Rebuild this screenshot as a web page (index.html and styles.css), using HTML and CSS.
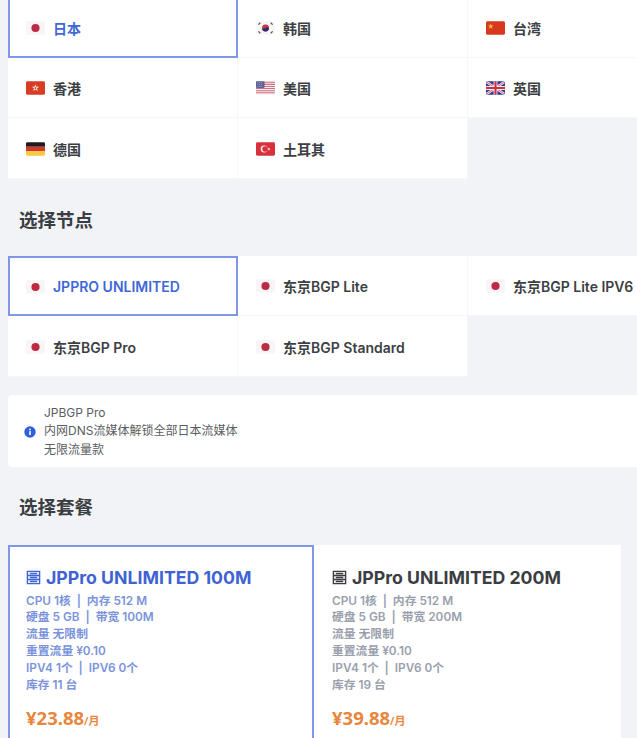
FILE: index.html
```html
<!DOCTYPE html>
<html lang="zh-CN">
<head>
<meta charset="utf-8">
<title>选择节点</title>
<link rel="stylesheet" href="styles.css">
</head>
<body>
<svg class="defs" width="0" height="0" aria-hidden="true">
  <symbol id="jp" viewBox="0 0 20 14"><rect width="20" height="14" rx="1.5" fill="#f9f5f6"/><circle cx="10" cy="7" r="4.3" fill="#bc2a44"/></symbol>
</svg>
<main class="page">
  <section class="grid regions">
    <div class="cell active"><svg class="flag"><use href="#jp"/></svg><span>日本</span></div>
    <div class="cell">
      <svg class="flag" viewBox="0 0 20 14"><rect width="20" height="14" rx="1.5" fill="#f8f6f7"/><circle cx="10" cy="7" r="3.600" fill="#c8324a"/><path d="M6.400 7a3.600 3.600 0 0 0 7.200 0c-1-1.600-2.400-.6-3.600 0s-2.600 1.600-3.600 0z" fill="#29306e"/><path d="M2.500 3.500l2-2M2.500 10.500l2 2M15.500 1.500l2 2M15.500 12.500l2-2" stroke="#555" stroke-width="1.300"/></svg>
      <span>韩国</span></div>
    <div class="cell">
      <svg class="flag" viewBox="0 0 20 14"><rect width="20" height="14" rx="1.500" fill="#d8381f"/><path d="M5 2l.8 2.300H8L6.200 5.700l.7 2.300L5 6.600 3.100 8l.7-2.300L2 4.300h2.200z" fill="#f5c53a"/></svg>
      <span>台湾</span></div>
    <div class="cell">
      <svg class="flag" viewBox="0 0 20 14"><rect width="20" height="14" rx="1.500" fill="#d83c24"/><path d="M10 3.300l1 2.500h2.700l-2.100 1.700.8 2.700L10 8.700l-2.400 1.500.8-2.700-2.100-1.700H9z" fill="#fbeadf"/><circle cx="10" cy="7" r="1" fill="#d83c24"/></svg>
      <span>香港</span></div>
    <div class="cell">
      <svg class="flag" viewBox="0 0 20 14"><rect width="20" height="14" rx="1" fill="#f6eef0"/><path d="M0 1h20M0 3.200h20M0 5.400h20M0 7.600h20M0 9.800h20M0 12h20" stroke="#cf6f7f" stroke-width="1.100"/><rect width="9" height="7" rx="1" fill="#5a6198"/><path d="M1.500 1.500h6M1.500 3.500h6M1.500 5.500h6" stroke="#c8cbe2" stroke-width=".7" stroke-dasharray="1 1"/></svg>
      <span>美国</span></div>
    <div class="cell">
      <svg class="flag" viewBox="0 0 20 14"><rect width="20" height="14" rx="2" fill="#2f3a8c"/><path d="M1 1l18 12M19 1L1 13" stroke="#f4eef2" stroke-width="2.600"/><path d="M1 1l18 12M19 1L1 13" stroke="#cf3350" stroke-width=".8"/><path d="M10 0v14M0 7h20" stroke="#f4eef2" stroke-width="4"/><path d="M10 0v14M0 7h20" stroke="#cf2f45" stroke-width="2.200"/></svg>
      <span>英国</span></div>
    <div class="cell">
      <svg class="flag" viewBox="0 0 20 14"><path d="M0 4.700V1.500A1.500 1.500 0 0 1 1.500 0h17A1.500 1.500 0 0 1 20 1.500v3.200z" fill="#23191a"/><rect y="4.700" width="20" height="4.700" fill="#d2372a"/><path d="M0 9.300h20v3.200a1.500 1.500 0 0 1-1.500 1.500h-17A1.500 1.500 0 0 1 0 12.500z" fill="#f6c93f"/></svg>
      <span>德国</span></div>
    <div class="cell">
      <svg class="flag" viewBox="0 0 20 14"><rect width="20" height="14" rx="1.500" fill="#d8313c"/><circle cx="8.500" cy="7" r="3.600" fill="#fbeef0"/><circle cx="9.500" cy="7" r="2.900" fill="#d8313c"/><path d="M13.500 5.400l.4 1.200 1.300 0-1 .8.400 1.200-1.100-.7-1 .7.400-1.200-1-.8 1.200 0z" fill="#fbeef0"/></svg>
      <span>土耳其</span></div>
  </section>

  <h2 class="heading nodes-heading">选择节点</h2>
  <section class="grid">
    <div class="cell active"><svg class="flag"><use href="#jp"/></svg><span>JPPRO UNLIMITED</span></div>
    <div class="cell"><svg class="flag"><use href="#jp"/></svg><span>东京BGP Lite</span></div>
    <div class="cell"><svg class="flag"><use href="#jp"/></svg><span>东京BGP Lite IPV6</span></div>
    <div class="cell"><svg class="flag"><use href="#jp"/></svg><span>东京BGP Pro</span></div>
    <div class="cell"><svg class="flag"><use href="#jp"/></svg><span>东京BGP Standard</span></div>
  </section>

  <section class="notice">
    <svg class="info" viewBox="0 0 12 12"><circle cx="6" cy="6" r="5.700" fill="#2f5fdc"/><circle cx="6" cy="3.400" r=".9" fill="#fff"/><rect x="5.200" y="5" width="1.600" height="4" rx=".5" fill="#fff"/></svg>
    <p>JPBGP Pro<br>内网DNS流媒体解锁全部日本流媒体<br>无限流量款</p>
  </section>

  <h2 class="heading plans-heading">选择套餐</h2>
  <section class="plans">
    <article class="plan active">
      <h3><svg class="server" viewBox="0 0 16 16"><path d="M1.500 1.500h13v13h-13zM1.500 5.800h13M1.500 10.200h13M4 3.700h8M4 8h8M4 12.300h8" fill="none" stroke="currentColor" stroke-width="1.500"/></svg>JPPro UNLIMITED 100M</h3>
      <p class="specs">CPU 1核 &nbsp;|&nbsp; 内存 512 M<br>硬盘 5 GB &nbsp;|&nbsp; 带宽 100M<br>流量 无限制<br>重置流量 ¥0.10<br>IPV4 1个 &nbsp;|&nbsp; IPV6 0个<br>库存 11 台</p>
      <p class="price">¥23.88<small>/月</small></p>
    </article>
    <article class="plan">
      <h3><svg class="server" viewBox="0 0 16 16"><path d="M1.500 1.500h13v13h-13zM1.500 5.800h13M1.500 10.200h13M4 3.700h8M4 8h8M4 12.300h8" fill="none" stroke="currentColor" stroke-width="1.500"/></svg>JPPro UNLIMITED 200M</h3>
      <p class="specs">CPU 1核 &nbsp;|&nbsp; 内存 512 M<br>硬盘 5 GB &nbsp;|&nbsp; 带宽 200M<br>流量 无限制<br>重置流量 ¥0.10<br>IPV4 1个 &nbsp;|&nbsp; IPV6 0个<br>库存 19 台</p>
      <p class="price">¥39.88<small>/月</small></p>
    </article>
  </section>
</main>
</body>
</html>
```
FILE: styles.css
```css
* { box-sizing: border-box; }
html, body { margin: 0; height: 738px; overflow: hidden; }
body {
  background: #f1f3f6;
  font-family: Inter, "Noto Sans CJK SC", sans-serif;
  color: #3a3d42;
}
.defs { display: block; height: 0; }
.page { margin-top: -3px; padding-left: 8px; width: 720px; }
.grid { display: grid; grid-template-columns: repeat(3, 230px); grid-auto-rows: 60.500px; }
.cell {
  display: flex;
  align-items: center;
  gap: 8px;
  padding: 2px 0 0 18px;
  background: #fff;
  border-right: 1px solid #f6f7f9;
  border-bottom: 1px solid #f6f7f9;
  font-size: 14px;
  font-weight: 600;
  color: #3c3f44;
}
.cell.active { border: 2px solid #7f97ea; color: #4067d8; padding-left: 16px; }
.flag { width: 19px; height: 14px; flex: none; }
.heading { margin: 0; font-size: 18.500px; font-weight: 700; color: #3a3d42; line-height: 24px; padding-left: 11px; }
.nodes-heading { padding-top: 29px; padding-bottom: 24px; }
.plans-heading { padding-top: 28px; padding-bottom: 26px; }
.notice {
  display: flex;
  align-items: center;
  gap: 8px;
  height: 72px;
  margin-top: 18px;
  padding: 2px 0 0 16px;
  background: #fff;
  border-radius: 4px;
}
.notice p { margin: 0; font-size: 12px; line-height: 18.500px; color: #5a5d62; }
.info { width: 12px; height: 12px; flex: none; }
.plans { display: grid; grid-template-columns: 306px 307px; }
.plan { height: 210px; padding: 21px 18px; background: #fff; }
.plan.active { border: 2px solid #7f97ea; padding: 19px 16px; color: #4067d8; }
.plan h3 { display: flex; align-items: center; gap: 5px; margin: 0; font-size: 17.700px; line-height: 24px; font-weight: 700; color: #3a3d42; }
.plan.active h3 { color: #3f63d2; }
.server { width: 15px; height: 15px; flex: none; }
.specs { margin: 3px 0 0; font-size: 11.800px; line-height: 16.900px; font-weight: 600; color: #9aa0ad; }
.plan.active .specs { color: #7b93dc; }
.price { margin: 11px 0 0; font-family: "Noto Sans", "Noto Sans CJK SC", sans-serif; font-size: 18.500px; line-height: 26px; font-weight: 700; color: #e8863c; }
.price small { font-size: 11px; font-weight: 600; }
```
